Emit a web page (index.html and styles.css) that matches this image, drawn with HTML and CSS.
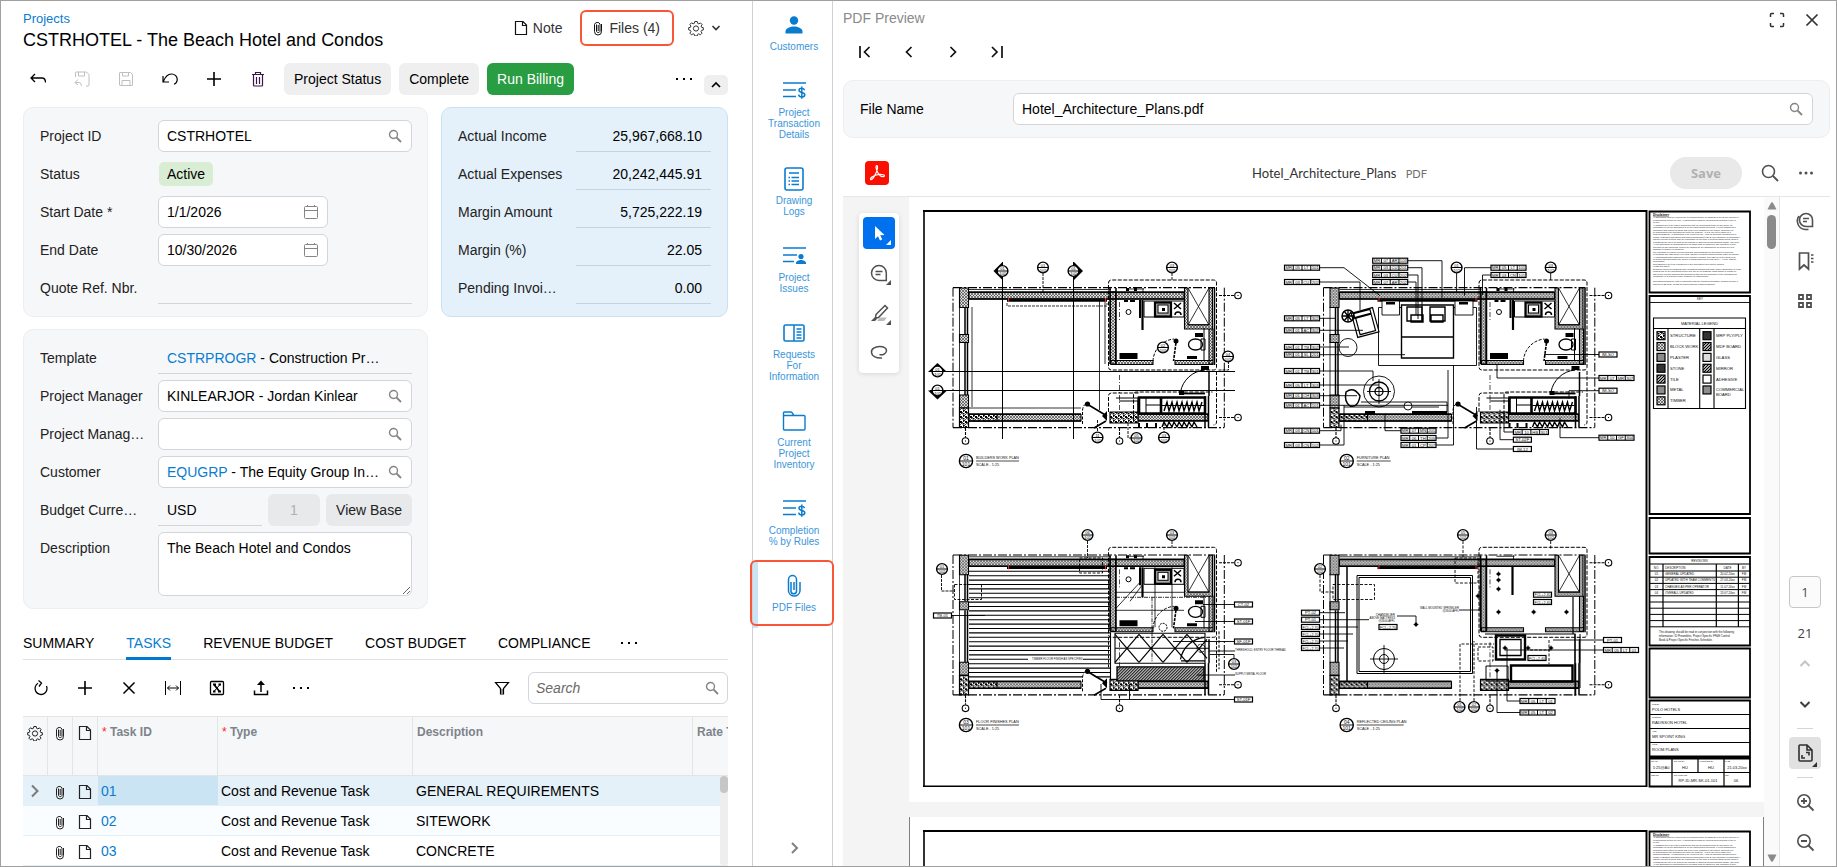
FILE: index.html
```html
<!DOCTYPE html>
<html lang="en">
<head>
<meta charset="utf-8">
<title>Projects</title>
<link rel="stylesheet" href="styles.css">
</head>
<body>
<svg class="sprite" aria-hidden="true">
  <defs>
    <symbol id="i-search" viewBox="0 0 14 14"><circle cx="5.5" cy="5.5" r="4" fill="none" stroke="currentColor" stroke-width="1.4"/><path d="M8.5 8.5l4.5 4.5" stroke="currentColor" stroke-width="1.8"/></symbol>
    <symbol id="i-cal" viewBox="0 0 16 16"><path d="M1.5 3.5q0-1 1-1h11q1 0 1 1v10q0 1-1 1h-11q-1 0-1-1zM1.500 6.500h13M4.500 1v2M11.500 1v2" fill="none" stroke="currentColor"/></symbol>
    <symbol id="i-clip" viewBox="0 0 10 16"><path d="M1.500 4.500v7a3.500 3.500 0 0 0 7 0V4M7 4v7.500a2 2 0 0 1-3.500 0V4.500M1.500 4.500a3 3 0 0 1 5.500-.5M5.200 5v6" fill="none" stroke="currentColor" stroke-width="1"/></symbol>
    <symbol id="i-doc" viewBox="0 0 14 16"><path d="M1.500 1.500h7.500l3.500 3.500v9.500h-11zM8.500 1.500v4h4" fill="none" stroke="currentColor" stroke-width="1.200"/></symbol>
    <symbol id="i-gear" viewBox="0 0 16 16"><path d="M6.800 1.500h2.400l.4 1.800 1.300.6 1.600-1 1.600 1.700-1 1.500.5 1.200 1.700.4v2.300l-1.700.4-.6 1.200 1 1.600-1.600 1.600-1.600-1-1.200.6-.4 1.600H6.800l-.4-1.600-1.300-.6-1.600 1-1.600-1.600 1-1.600-.5-1.200L.700 9.900V7.600l1.700-.3.500-1.300-1-1.500 1.600-1.700 1.600 1 1.300-.5z" fill="none" stroke="currentColor"/><circle cx="8" cy="8.500" r="2.600" fill="none" stroke="currentColor"/></symbol>
    <symbol id="i-plus" viewBox="0 0 16 16"><path d="M8 1v14M1 8h14" stroke="currentColor" stroke-width="1.600"/></symbol>
    <symbol id="i-dots" viewBox="0 0 16 16"><path d="M0 7h2v2H0zM7 7h2v2H7zM14 7h2v2h-2z" fill="currentColor"/></symbol>
    <symbol id="i-billing" viewBox="0 0 24 24"><path d="M1 4h23M1 11h13M1 17.500h13" stroke="currentColor" stroke-width="1.600"/><path d="M22.500 11.200c-.4-1.600-1.600-2-2.700-2-1.600 0-2.800.7-2.800 2.100 0 3 5.800 1.400 5.800 4.500 0 1.500-1.400 2.200-3 2.200-1.700 0-2.900-.7-3.200-2.300M19.800 7.500v12.200" fill="none" stroke="currentColor" stroke-width="1.500"/></symbol>
  </defs>
</svg>
<div class="frame">
  <main class="project">
    <header class="head">
      <div>
        <a class="crumb" href="#projects">Projects</a>
        <h1>CSTRHOTEL - The Beach Hotel and Condos</h1>
      </div>
      <div class="head-actions">
        <button class="plain"><svg class="w14"><use href="#i-doc"/></svg>Note</button>
        <button class="plain marked"><svg class="w10"><use href="#i-clip"/></svg>Files (4)</button>
        <button class="plain gear" aria-label="Settings"><svg class="w16"><use href="#i-gear"/></svg><svg class="w10" viewBox="0 0 10 16"><path d="M1.500 6l3.500 3.500L8.500 6" fill="none" stroke="currentColor" stroke-width="1.600"/></svg></button>
      </div>
    </header>

    <div class="toolbar">
      <button class="tool" aria-label="Back"><svg class="w16" viewBox="0 0 16 16"><path d="M5 3L1 7l4 4M1 7h11q3.500 0 3.500 4.500" fill="none" stroke="currentColor" stroke-width="1.300"/></svg></button>
      <button class="tool off" aria-label="Save and close"><svg class="w16" viewBox="0 0 16 16"><path d="M1.500 6V2q0-1 1-1h10l2.500 2.500V14q0 1-1 1h-2M4.500 1v4h6V1M4 8.500L1 11.500l3 2.500M1 11.500h4q2.500 0 2.500 3.500" fill="none" stroke="currentColor"/></svg></button>
      <button class="tool off" aria-label="Save"><svg class="w16" viewBox="0 0 16 16"><path d="M1.500 2q0-.5.500-.5h10.500l2 2V14q0 .500-.5.500H2q-.5 0-.5-.5zM4.500 1.500v3.500h6V1.500M4 14.500v-5h8v5" fill="none" stroke="currentColor"/></svg></button>
      <button class="tool" aria-label="Undo"><svg class="w16" viewBox="0 0 16 16"><path d="M1 5v6h6M1.200 11C3 6 6 3 9.500 3c3.500 0 5.700 2.600 5.700 5.200 0 2.500-1.500 4.300-3.200 5" fill="none" stroke="currentColor" stroke-width="1.200"/></svg></button>
      <button class="tool" aria-label="Add"><svg class="w16"><use href="#i-plus"/></svg></button>
      <button class="tool" aria-label="Delete"><svg class="w16 trash" viewBox="0 0 16 16"><path d="M2 3.500h12M5.500 3V1.500h5V3M3.500 4v10q0 1 1 1h7q1 0 1-1V4M6.500 6v7M9.500 6v7" fill="none" stroke="currentColor" stroke-width="1.200"/></svg></button>
      <button class="btn">Project Status</button>
      <button class="btn">Complete</button>
      <button class="btn go">Run Billing</button>
      <span class="grow"></span>
      <button class="tool more" aria-label="More"><svg class="w16"><use href="#i-dots"/></svg></button>
      <button class="fold" aria-label="Collapse"><svg class="w10" viewBox="0 0 10 16"><path d="M1 10l4-4 4 4" fill="none" stroke="currentColor" stroke-width="1.700"/></svg></button>
    </div>

    <div class="cards">
      <section class="card">
        <div class="row"><label for="pid">Project ID</label><div class="box"><input id="pid" value="CSTRHOTEL"><svg class="w14 ico"><use href="#i-search"/></svg></div></div>
        <div class="row"><span class="lab">Status</span><span class="pill">Active</span></div>
        <div class="row"><label for="sd">Start Date *</label><div class="box date"><input id="sd" value="1/1/2026"><svg class="w16 ico"><use href="#i-cal"/></svg></div></div>
        <div class="row"><label for="ed">End Date</label><div class="box date"><input id="ed" value="10/30/2026"><svg class="w16 ico"><use href="#i-cal"/></svg></div></div>
        <div class="row"><label for="qr">Quote Ref. Nbr.</label><div class="box line"><input id="qr" readonly></div></div>
      </section>
      <section class="card totals">
        <div class="row"><label for="t1">Actual Income</label><div class="box line"><input id="t1" readonly value="25,967,668.10"></div></div>
        <div class="row"><label for="t2">Actual Expenses</label><div class="box line"><input id="t2" readonly value="20,242,445.91"></div></div>
        <div class="row"><label for="t3">Margin Amount</label><div class="box line"><input id="t3" readonly value="5,725,222.19"></div></div>
        <div class="row"><label for="t4">Margin (%)</label><div class="box line"><input id="t4" readonly value="22.05"></div></div>
        <div class="row"><label for="t5">Pending Invoi…</label><div class="box line"><input id="t5" readonly value="0.00"></div></div>
      </section>
      <section class="card">
        <div class="row"><span class="lab">Template</span><div class="box line"><a href="#template">CSTRPROGR</a>&nbsp;- Construction Pr…</div></div>
        <div class="row"><label for="pm">Project Manager</label><div class="box"><input id="pm" value="KINLEARJOR - Jordan Kinlear"><svg class="w14 ico"><use href="#i-search"/></svg></div></div>
        <div class="row"><label for="pm2">Project Manag…</label><div class="box"><input id="pm2"><svg class="w14 ico"><use href="#i-search"/></svg></div></div>
        <div class="row"><span class="lab">Customer</span><div class="box"><span class="val"><a href="#customer">EQUGRP</a> - The Equity Group In…</span><svg class="w14 ico"><use href="#i-search"/></svg></div></div>
        <div class="row"><label for="cur">Budget Curre…</label><div class="currency"><div class="box line"><input id="cur" readonly value="USD"></div><input class="rate" disabled value="1" aria-label="Rate"><button class="base">View Base</button></div></div>
        <div class="row tall"><label for="desc">Description</label><textarea id="desc">The Beach Hotel and Condos</textarea></div>
      </section>
    </div>

    <nav class="tabs">
      <a href="#summary">SUMMARY</a><a class="on" href="#tasks">TASKS</a><a href="#revenue">REVENUE BUDGET</a><a href="#cost">COST BUDGET</a><a href="#compliance">COMPLIANCE</a>
      <button class="plain" aria-label="More tabs"><svg class="w16"><use href="#i-dots"/></svg></button>
    </nav>

    <div class="gridbar">
      <button class="tool" aria-label="Refresh"><svg class="w16" viewBox="0 0 16 16"><path d="M5 3.300A6 6 0 1 0 13.500 6M5.500.500L8.500 3 6 6.500" fill="none" stroke="currentColor" stroke-width="1.300"/></svg></button>
      <button class="tool" aria-label="Add row"><svg class="w16"><use href="#i-plus"/></svg></button>
      <button class="tool" aria-label="Delete row"><svg class="w16" viewBox="0 0 16 16"><path d="M2.500 2.500l11 11M13.500 2.500l-11 11" stroke="currentColor" stroke-width="1.500"/></svg></button>
      <button class="tool" aria-label="Fit columns"><svg class="w16" viewBox="0 0 16 16"><path d="M.500 1v14M15.500 1v14M2.500 8h11M5 5.500L2.500 8 5 10.500M11 5.500L13.500 8 11 10.500" fill="none" stroke="currentColor"/></svg></button>
      <button class="tool" aria-label="Export"><svg class="w16" viewBox="0 0 16 16"><rect x="1.500" y="1.500" width="13" height="13" rx="1" fill="none" stroke="currentColor" stroke-width="1.300"/><path d="M4 4.500h3M9.500 4.500h2.500M4 11.500h2.500M9 11.500h3M5 4.500l5.500 7" stroke="currentColor" stroke-width="1.800"/><path d="M11 4.500l-6 7" stroke="currentColor"/></svg></button>
      <button class="tool" aria-label="Upload"><svg class="w16" viewBox="0 0 16 16"><path d="M1.500 10.500v4h13v-4M8 12V3" fill="none" stroke="currentColor" stroke-width="1.500"/><path d="M8 .500l4 4.500H4z" fill="currentColor"/></svg></button>
      <button class="tool narrow" aria-label="More"><svg class="w16"><use href="#i-dots"/></svg></button>
      <span class="grow"></span>
      <button class="tool" aria-label="Filter"><svg class="w16" viewBox="0 0 16 16"><path d="M1.500 2.500h13L9.500 8.500V14h-3V8.500z" fill="none" stroke="currentColor" stroke-width="1.200"/><path d="M7 9h2v5H7z" fill="#888"/></svg></button>
      <div class="box find"><input placeholder="Search" aria-label="Search"><svg class="w14 ico"><use href="#i-search"/></svg></div>
    </div>

    <div class="tasks">
      <table>
        <colgroup><col class="c25"><col class="c25"><col class="c25"><col class="c120"><col class="c195"><col class="c280"><col class="c120"></colgroup>
        <thead><tr><th><svg class="w16"><use href="#i-gear"/></svg></th><th><svg class="w10"><use href="#i-clip"/></svg></th><th><svg class="w14"><use href="#i-doc"/></svg></th><th><i>*</i> Task ID</th><th><i>*</i> Type</th><th>Description</th><th>Rate Table</th></tr></thead>
        <tbody>
          <tr class="sel"><td><svg class="w10 arrow" viewBox="0 0 10 16"><path d="M2 2.500L7.500 8 2 13.500" fill="none" stroke="currentColor" stroke-width="2"/></svg></td><td><svg class="w10"><use href="#i-clip"/></svg></td><td><svg class="w14"><use href="#i-doc"/></svg></td><td class="cur"><a href="#t01">01</a></td><td>Cost and Revenue Task</td><td>GENERAL REQUIREMENTS</td><td></td></tr>
          <tr class="alt"><td></td><td><svg class="w10"><use href="#i-clip"/></svg></td><td><svg class="w14"><use href="#i-doc"/></svg></td><td><a href="#t02">02</a></td><td>Cost and Revenue Task</td><td>SITEWORK</td><td></td></tr>
          <tr><td></td><td><svg class="w10"><use href="#i-clip"/></svg></td><td><svg class="w14"><use href="#i-doc"/></svg></td><td><a href="#t03">03</a></td><td>Cost and Revenue Task</td><td>CONCRETE</td><td></td></tr>
        </tbody>
      </table>
      <div class="vbar"><span></span></div>
    </div>
  </main>

  <aside class="rail">
    <a href="#customers"><svg viewBox="0 0 24 24"><circle cx="12" cy="7.500" r="4.200" fill="currentColor"/><path d="M3.500 20.500v-2c0-3.500 5-5 8.500-5s8.500 1.500 8.500 5v2z" fill="currentColor"/></svg>Customers</a>
    <a href="#transactions"><svg><use href="#i-billing"/></svg>Project Transaction Details</a>
    <a href="#drawings"><svg viewBox="0 0 24 24"><rect x="3" y="1" width="18" height="22" rx="2" fill="none" stroke="currentColor" stroke-width="1.600"/><path d="M7 6h10M9.500 10.500h7.500M9.500 14h7.500M9.500 17.500h7.500M6.500 10.500h1.500M6.500 14h1.500M6.500 17.500h1.500" stroke="currentColor" stroke-width="1.500"/></svg>Drawing Logs</a>
    <a href="#issues"><svg viewBox="0 0 24 24"><path d="M1 4h23M1 11h14M1 17.500h11" stroke="currentColor" stroke-width="1.600"/><circle cx="19" cy="12.500" r="2.600" fill="currentColor"/><path d="M14 20v-1c0-2 3-3 5-3s5 1 5 3v1z" fill="currentColor"/></svg>Project Issues</a>
    <a href="#rfi"><svg viewBox="0 0 24 24"><rect x="2" y="4" width="20" height="16" rx="1.500" fill="none" stroke="currentColor" stroke-width="1.600"/><path d="M12 4v16M14.500 8h5M14.500 11h5M14.500 14h5M14.500 17h5" stroke="currentColor" stroke-width="1.500"/></svg>Requests For Information</a>
    <a href="#inventory"><svg viewBox="0 0 24 24"><path d="M1.500 20V4q0-1 1-1H9q1 0 1.500 1.500L12 6.500h10q1 0 1 1V20q0 1-1 1H2.500q-1 0-1-1zM1.500 6.500H12" fill="none" stroke="currentColor" stroke-width="1.400"/></svg>Current Project Inventory</a>
    <a href="#completion"><svg><use href="#i-billing"/></svg>Completion % by Rules</a>
    <a class="current" href="#pdf"><svg viewBox="0 0 24 24"><path d="M9 8v9.500a2.800 2.800 0 0 0 5.500 0V5.500a4 4 0 0 0-8 0V17a5.800 5.800 0 0 0 11.500 0V8M12 8v8" fill="none" stroke="currentColor" stroke-width="1.500"/></svg>PDF Files</a>
    <button class="plain expand" aria-label="Expand"><svg class="w10" viewBox="0 0 10 16"><path d="M2 3l5 5-5 5" fill="none" stroke="currentColor" stroke-width="2"/></svg></button>
  </aside>

  <section class="preview">
    <header class="pv-head">
      <h2>PDF Preview</h2>
      <div>
        <button class="plain" aria-label="Full screen"><svg class="w16" viewBox="0 0 16 16"><path d="M1.500 5V2.500q0-1 1-1H5M11 1.500h2.500q1 0 1 1V5M14.500 11v2.500q0 1-1 1H11M5 14.500H2.500q-1 0-1-1V11" fill="none" stroke="currentColor" stroke-width="1.500"/></svg></button>
        <button class="plain" aria-label="Close"><svg class="w16" viewBox="0 0 16 16"><path d="M2.500 2.500l11 11M13.500 2.500l-11 11" stroke="currentColor" stroke-width="1.700"/></svg></button>
      </div>
    </header>
    <div class="pager">
      <button class="tool" aria-label="First"><svg class="w16" viewBox="0 0 16 16"><path d="M3 2v12M12.500 3l-5 5 5 5" fill="none" stroke="currentColor" stroke-width="1.700"/></svg></button>
      <button class="tool" aria-label="Previous"><svg class="w16" viewBox="0 0 16 16"><path d="M10.500 3l-5 5 5 5" fill="none" stroke="currentColor" stroke-width="1.700"/></svg></button>
      <button class="tool" aria-label="Next"><svg class="w16" viewBox="0 0 16 16"><path d="M5.500 3l5 5-5 5" fill="none" stroke="currentColor" stroke-width="1.700"/></svg></button>
      <button class="tool" aria-label="Last"><svg class="w16" viewBox="0 0 16 16"><path d="M13 2v12M3 3l5 5-5 5" fill="none" stroke="currentColor" stroke-width="1.700"/></svg></button>
    </div>
    <div class="card filecard"><label for="fn">File Name</label><div class="box"><input id="fn" value="Hotel_Architecture_Plans.pdf"><svg class="w14 ico"><use href="#i-search"/></svg></div></div>

    <div class="viewer">
      <header class="vw-head">
        <svg class="logo" viewBox="0 0 24 24"><rect width="24" height="24" rx="4" fill="#fa0f00"/><path d="M12 4.500c-1.800.2-1 4 1 7.500 1.800 3 4.500 4.200 6.300 3.200 1-2-4.800-2.200-8-1.200-3.500 1-6.300 3-5.800 4.500 1.600 1 4-3 5.500-6.500 1.300-3 2.200-7.200 1-7.500z" fill="none" stroke="#fff" stroke-width="1.200"/></svg>
        <p><strong>Hotel_Architecture_Plans</strong> <span>PDF</span></p>
        <div class="vw-actions">
          <button class="save" disabled>Save</button>
          <button class="plain" aria-label="Find"><svg class="w18" viewBox="0 0 18 18"><circle cx="7.500" cy="7.500" r="6" fill="none" stroke="currentColor" stroke-width="1.600"/><path d="M12 12l5 5" stroke="currentColor" stroke-width="1.800"/></svg></button>
          <button class="plain" aria-label="Options"><svg class="w16" viewBox="0 0 16 16"><circle cx="2.500" cy="8" r="1.500" fill="currentColor"/><circle cx="8" cy="8" r="1.500" fill="currentColor"/><circle cx="13.500" cy="8" r="1.500" fill="currentColor"/></svg></button>
        </div>
      </header>
      <div class="vw-body">
        <div class="canvas">
          <div class="palette-col"><div class="palette">
            <button class="picked" aria-label="Select"><svg viewBox="0 0 32 32"><path d="M12 9v13l3-2.700 2 4.200 2.200-1-2-4.200 4.300-.4z" fill="#fff"/><path d="M28 23v5h-5z" fill="#fff"/></svg></button>
            <button aria-label="Comment"><svg viewBox="0 0 32 32"><path d="M16 8.500a7.300 7.300 0 0 0 0 15h7.300V16A7.300 7.300 0 0 0 16 8.500zM12.500 14.500h7M12.500 17.500h5" fill="none" stroke="#505050" stroke-width="1.500"/><path d="M28 23v5h-5z" fill="#505050"/></svg></button>
            <button aria-label="Highlight"><svg viewBox="0 0 32 32"><path d="M13 17.500l9-9 2.500 2.500-9 9.500-3 .5z" fill="none" stroke="#505050" stroke-width="1.500"/><path d="M8 24l4-4 2 2-2 2z" fill="#505050"/><path d="M17 20.500h7l-3 3.500h-7z" fill="#bbb"/><path d="M28 23v5h-5z" fill="#505050"/></svg></button>
            <button aria-label="Draw"><svg viewBox="0 0 32 32"><path d="M16.500 17.500c3 1 6.500-.5 7-3.500.4-3-3-4.500-7-4.500-4.500 0-8.500 2.500-8 6 .5 4 5 6 10.500 5.500" fill="none" stroke="#505050" stroke-width="1.500"/></svg></button>
          </div></div>
          <div class="sheets">
            <svg id="sheet1" class="sheet" viewBox="909 197 855 605"></svg>
            <svg id="sheet2" class="sheet next" viewBox="909 197 855 605"></svg>
          </div>
        </div>
        <div class="scroll"><svg viewBox="0 0 10 8"><path d="M5 0q1 0 4.500 7.500h-9Q4 0 5 0z" fill="#8a8a8a"/></svg><span></span><i></i><svg viewBox="0 0 10 8"><path d="M5 8q1 0 4.500-7.500h-9Q4 8 5 8z" fill="#8a8a8a"/></svg></div>
        <div class="side">
          <button aria-label="Comments"><svg viewBox="0 0 32 32"><path d="M17 8.500a6.300 6.300 0 0 0 0 13h6.500V15A6.400 6.400 0 0 0 17 8.500zM14 13.500h6M14 16.500h4M10 11c-3 4-2 12.500 6 13.500h3.500" fill="none" stroke="#505050" stroke-width="1.600"/></svg></button>
          <button aria-label="Bookmarks"><svg viewBox="0 0 32 32"><path d="M10.500 8h9v16l-4.500-4-4.500 4z" fill="none" stroke="#505050" stroke-width="1.700"/><path d="M22 10h2.500M22 13.500h2.500M22 17h2.500" stroke="#505050" stroke-width="1.700"/></svg></button>
          <button aria-label="Thumbnails"><svg viewBox="0 0 32 32"><path d="M10 10h4v4h-4zM18 10h4v4h-4zM10 18h4v4h-4zM18 18h4v4h-4z" fill="none" stroke="#505050" stroke-width="1.800"/></svg></button>
          <span class="grow"></span>
          <input class="pageno" value="1" aria-label="Page">
          <span class="count">21</span>
          <button aria-label="Page up"><svg viewBox="0 0 32 32"><path d="M11.500 18l4.500-4.500 4.500 4.500" fill="none" stroke="#c4c4c4" stroke-width="2"/></svg></button>
          <button aria-label="Page down"><svg viewBox="0 0 32 32"><path d="M11.500 14l4.500 4.500 4.500-4.500" fill="none" stroke="#404040" stroke-width="2"/></svg></button>
          <hr>
          <button class="fit" aria-label="Fit page"><svg viewBox="0 0 32 32"><path d="M10 9q0-1 1-1h7l5 5v10q0 1-1 1H11q-1 0-1-1zM18 8v5h5M17 15.500h3v3M13 18v3h3" fill="none" stroke="#303030" stroke-width="1.600"/><path d="M28 25v5h-5z" fill="#303030"/></svg></button>
          <hr>
          <button aria-label="Zoom in"><svg viewBox="0 0 32 32"><circle cx="15" cy="15" r="6.200" fill="none" stroke="#505050" stroke-width="1.600"/><path d="M19.500 19.500l5 5M12 15h6M15 12v6" stroke="#505050" stroke-width="1.800"/></svg></button>
          <button aria-label="Zoom out"><svg viewBox="0 0 32 32"><circle cx="15" cy="15" r="6.200" fill="none" stroke="#505050" stroke-width="1.600"/><path d="M19.500 19.500l5 5M12 15h6" stroke="#505050" stroke-width="1.800"/></svg></button>
        </div>
      </div>
    </div>
  </section>
</div>
<script src="plans.js"></script>
</body>
</html>
```
FILE: styles.css
```css
* { box-sizing: border-box; }
body { margin: 0; background: #fff; color: #000; font: 14px/18px "Liberation Sans", Arial, sans-serif; }
button, input, textarea { font: inherit; color: inherit; margin: 0; }
button { border: 0; background: none; padding: 0; cursor: pointer; }
a { color: #0a7cd0; text-decoration: none; }
h1, h2, p { margin: 0; font-weight: 400; }
svg { display: block; flex: none; }
.sprite { position: absolute; width: 0; height: 0; }
.w10 { width: 10px; height: 16px; }
.w14 { width: 14px; height: 16px; }
.w16 { width: 16px; height: 16px; }
.w18 { width: 18px; height: 18px; }
.grow { flex: 1; }

.frame { display: grid; grid-template-columns: minmax(0, 751fr) 81px minmax(0, 1003fr); height: 100vh; border: 1px solid #a0a0a0; overflow: hidden; }
.project { display: flex; flex-direction: column; min-height: 0; padding: 9px 24px 0 22px; }

.head { display: flex; justify-content: space-between; align-items: flex-start; }
.crumb { display: block; font-size: 13px; }
h1 { font-size: 18px; line-height: 24px; }
.head-actions { display: flex; align-items: center; gap: 18px; padding-right: 7px; color: #333; }
.plain { display: flex; align-items: center; gap: 5px; }
.head-actions svg { color: #111; }
.marked { height: 36px; padding: 0 12px 0 11px; gap: 6px; border: 2px solid #fb5537; border-radius: 6px; }
.gear { margin-left: -4px; gap: 7px; }
.head-actions .gear svg { color: #333; }

.toolbar { display: flex; align-items: center; gap: 8px; margin-top: 11px; }
.tool { display: flex; align-items: center; justify-content: center; width: 32px; height: 32px; }
.toolbar .tool, .gridbar .tool { width: 36px; }
.toolbar .tool:first-child { margin-left: -3px; }
.off { color: #bfbfbf; }
.trash { color: #3b1747; }
.btn { height: 32px; padding: 0 10px; border-radius: 6px; background: #efefef; }
.go { background: #289d42; color: #fff; }
.fold { display: flex; align-items: center; justify-content: center; align-self: flex-end; width: 24px; height: 20px; border-radius: 5px; background: #efefef; }
.toolbar .more { margin-right: -6px; }

.cards { display: grid; grid-template-columns: minmax(0, 405fr) minmax(0, 287fr); gap: 12px 13px; margin-top: 12px; }
.card { padding: 12px 15px 12px 16px; border: 1px solid #eceef0; border-radius: 10px; background: #f6f7f9; }
.card .row + .row { margin-top: 6px; }
.row { display: grid; grid-template-columns: 118px minmax(0, 1fr); align-items: center; min-height: 32px; color: #222; }
.box { display: flex; align-items: center; height: 32px; padding: 0 8px; border: 1px solid #d3d5d8; border-radius: 6px; background: #fff; color: #000; white-space: nowrap; }
.box input { flex: 1; width: 0; min-width: 0; padding: 0; border: 0; background: none; outline: none; }
.val { flex: 1; }
.ico { color: #858585; }
.box .w14.ico { height: 14px; margin-right: 1px; }
.date { width: 170px; }
.line { border-width: 0 0 1px; border-radius: 0; background: none; padding: 0 9px; }
.pill { justify-self: start; padding: 3px 8px; margin-left: 1px; border-radius: 5px; background: #d9ecd4; color: #000; }
.totals { padding-right: 16px; background: #e4f1fa; border-color: #c9e2f3; }
.totals .line { border-color: #c6d3dc; }
.totals input { text-align: right; }
.currency { display: grid; grid-template-columns: minmax(0, 104fr) 52px 86px; gap: 6px; }
.rate, .base { height: 32px; border: 0; border-radius: 6px; background: #e8e9eb; text-align: center; }
.rate { width: 100%; color: #b0b0b0; }
.tall { align-items: start; }
.tall label { padding-top: 7px; }
textarea { height: 64px; padding: 6px 8px; border: 1px solid #d3d5d8; border-radius: 6px; outline: none; color: #000; background: #fff; }

.tabs { display: flex; align-items: stretch; gap: 32px; height: 34px; margin-top: 17px; border-bottom: 1px solid #dfe1e4; white-space: nowrap; }
.tabs a { color: #000; line-height: 34px; }
.tabs .on { margin-bottom: -1px; border-bottom: 3px solid #0078d0; color: #0a7cd0; }
.tabs button { margin-left: -2px; }

.gridbar { display: flex; align-items: center; gap: 8px; margin-top: 12px; }
.gridbar .narrow { margin-left: -4px; }
.find { width: 200px; padding: 0 7px; }
.find input::placeholder { color: #6a6a6a; font-style: italic; opacity: 1; }

.tasks { display: grid; grid-template-columns: minmax(0, 1fr); flex: 1; min-height: 0; margin-top: 12px; overflow: hidden; position: relative; }
table { width: 100%; align-self: start; border-collapse: separate; border-spacing: 0; table-layout: fixed; }
.c25 { width: 25px; }
.c120 { width: 120px; }
.c195 { width: 195px; }
.c280 { width: 280px; }
th { height: 60px; padding: 6px 4px; border: solid #e2e4e6; border-width: 1px 1px 1px 0; background: #f6f7f9; color: #7d838a; font-size: 12px; text-align: left; vertical-align: top; white-space: nowrap; }
th i { color: #f22; font-style: normal; font-weight: 400; }
th svg, td svg { margin: 2px auto 0; color: #222; }
td { height: 30px; padding: 0 3px; border-bottom: 1px solid #e4f0f8; white-space: nowrap; }
th:nth-child(-n+3), td:nth-child(-n+3) { padding-left: 0; padding-right: 1px; }
.sel td { background: #e4f1f9; }
.sel .cur { background: #cbe4f4; }
.alt td { background: #f9fdff; }
td .arrow { color: #7a7a7a; margin-top: 0; }
.vbar { position: absolute; top: 60px; right: 0; bottom: 0; width: 8px; border-radius: 4px; background: #eee; }
.vbar span { display: block; height: 17px; border-radius: 4px; background: #c6c6c6; }

.rail { display: flex; flex-direction: column; min-height: 0; border: solid #d2d2d6; border-width: 0 1px; }
.rail a { position: relative; display: flex; flex-direction: column; align-items: center; gap: 4px; padding: 12px 10px 15px 13px; color: #3a96da; font-size: 10px; line-height: 11px; text-align: center; }
.rail svg { color: #0a7cd0; }
.rail a svg { width: 24px; height: 24px; }
.rail .current { box-shadow: inset 5px 0 #cbe4f4; }
.rail .current::after { content: ""; position: absolute; inset: -2px -2px 2px -3px; border: 2px solid #fb5537; border-radius: 6px; }
.expand { margin: auto 0 10px; padding-left: 4px; justify-content: center; }
.rail .expand svg { color: #808080; }

.preview { display: flex; flex-direction: column; min-height: 0; padding: 8px 6px 0 10px; }
.pv-head { display: flex; justify-content: space-between; }
h2 { font-size: 14px; line-height: 18px; color: #8a8a8a; }
.pv-head div { display: flex; gap: 19px; padding: 3px 10px 0 0; color: #333; }
.pager { display: flex; gap: 12px; margin: 8px 0 12px 6px; color: #111; }
.filecard { display: grid; grid-template-columns: 153px minmax(0, 1fr); align-items: center; padding-right: 16px; }

.viewer { display: flex; flex-direction: column; flex: 1; min-height: 0; color: #505050; }
.vw-head { display: grid; grid-template-columns: 1fr auto 1fr; align-items: center; flex: none; height: 59px; padding: 12px 16px 0 22px; border-bottom: 1px solid #e6e6e6; }
.logo { width: 24px; height: 24px; }
.vw-head p { font: 13px/20px Lato, "Noto Sans", sans-serif; }
.vw-head strong { font-weight: 400; color: #333; }
.vw-head p span { margin-left: 6px; font-size: 11px; color: #6e6e6e; }
.vw-actions { display: flex; align-items: center; justify-content: flex-end; gap: 19px; }
.save { width: 72px; height: 32px; border-radius: 16px; background: #e9e9e9; color: #b1b1b1; font: bold 13px/20px "Open Sans", sans-serif; }
.vw-body { display: grid; grid-template-columns: minmax(0, 1fr) 15px 51px; flex: 1; min-height: 0; }
.canvas { display: grid; grid-template-columns: 66px minmax(0, 1fr); min-height: 0; background: #f4f4f4; overflow: hidden; }
.palette-col { padding: 16px 10px 0 16px; }
.palette { padding: 4px; border-radius: 4px; background: #fff; box-shadow: 0 1px 5px rgba(0, 0, 0, .12); }
.palette button { display: block; width: 32px; height: 32px; border-radius: 4px; }
.palette button + button { margin-top: 8px; }
.palette .picked { background: #0071ee; }
.sheets { min-height: 0; overflow: hidden; }
.sheet { width: 100%; height: auto; background: #fff; }
.next { margin-top: 15px; }
.scroll { display: flex; flex-direction: column; align-items: center; padding: 5px 0 4px; background: #fafafa; }
.scroll svg { width: 10px; height: 8px; }
.scroll span { width: 9px; height: 34px; margin-top: 5px; border-radius: 5px; background: #8a8a8a; }
.scroll i { flex: 1; }
.side { display: flex; flex-direction: column; align-items: center; gap: 8px; min-height: 0; padding: 8px 0; border-left: 1px solid #e4e4e4; }
.side button { width: 32px; height: 32px; border-radius: 4px; flex: none; }
.side hr { width: 16px; margin: 0; border: 0; border-top: 1px solid #d5d5d5; }
.pageno { width: 32px; height: 32px; padding: 0; border: 1px solid #c6c6c6; border-radius: 4px; background: #fbfbfb; text-align: center; font: 13px "Open Sans", sans-serif; }
.count { margin: 6px 0 -4px; font: 13px/22px "Open Sans", sans-serif; color: #404040; }
.side .fit { background: #e1e1e1; }

.sheet text { font-family: "Liberation Sans", Arial, sans-serif; fill: #111; }
```
FILE: plans.js
```javascript
const walls = `
<path d="M953 287.700H1215M953 427.600H1224" fill="none" stroke="#000" stroke-width="1.200" stroke-dasharray="9 2 2 2"/>
<path d="M953 287.700V427.600M1224.300 287.700V427.600" fill="none" stroke="#000" stroke-dasharray="9 2 2 2"/>
<g fill="url(#wall)" stroke="#000" stroke-width="1.100">
<path d="M959.500 288h9v19.500h-9zM959.500 334.500h9v8h-9zM959.500 395h9v13h-9zM969 292.500h215v6.500H969zM969 414.500h112v6.500H969zM1110.500 292h5v72h-5zM1111 360.500h42v4h-42zM1175 360.500h38v4h-38zM1184.500 288h3.500v37h21v-37h3.500v41h-28zM1138 414.500h70v6h-70zM1209 329h4v35h-4z"/>
</g>
<g fill="url(#rubble)" stroke="#000" stroke-width="1.200"><path d="M959.500 408h9v19.500h-9zM969 414.500h28v6.500h-28zM1110 412h28v11h-28z"/></g>
<path d="M965 307v27M967.500 307v27M965 343v52M967.500 343v52M969 292h215M969 299h215M969 414h112M969 421h112M1138 414h70M1138 421h70M1110 288v76M1116 288v76M1205 396v31.500M1208.500 396v31.500M1209 372v24M1214.500 288v77" stroke="#000" stroke-width="1.500" fill="none"/>
<path d="M969 289.500h142M959.500 307v88M1143 288v4M1126 289h18" stroke="#000" stroke-width=".8" fill="none"/>
<path d="M1188 288l21 37M1209 288l-21 37M1188 324.500h21" stroke="#000" stroke-width=".8" fill="none"/>
<path d="M1007 300.500h100" stroke="#000" stroke-width="2.400"/>
<path d="M1008.500 298v4M1105.500 298v4" stroke="#e23"/>
<g fill="none" stroke="#000" stroke-width="1.100"><circle cx="1238" cy="295.500" r="3.300"/><circle cx="1238" cy="417.500" r="3.300"/><circle cx="965.500" cy="441" r="3.300"/><circle cx="1119.500" cy="441" r="3.300"/><path d="M1219 295.500h15M1219 417.500h15M965.500 428v9.500M1119.500 428v9.500" stroke-dasharray="3 1"/></g>
<path d="M1237.500 295h1v1h-1zM1237.500 417h1v1h-1zM965 440.500h1v1h-1zM1119 440.500h1v1h-1z"/>
<path d="M1108.500 283q0-3 3-3h102q3 0 3 3v84q0 3-3 3h-102q-3 0-3-3z" fill="none" stroke="#000" stroke-dasharray="4 1.500"/>
<path d="M1119.500 302v18M1119.500 375v38" stroke="#000" stroke-width=".7" stroke-dasharray="5 2 1 2"/>`;

const bath = `
<path d="M1142.500 300v30" stroke="#000" stroke-width="2.200"/><path d="M1140 300v18" stroke="#000" stroke-width="2"/>
<g fill="none" stroke="#000"><path d="M1144 301h40v16h-40zM1204 328v33"/><rect x="1155" y="302.500" width="16" height="14" stroke-width="2.200" fill="#aaa"/><rect x="1158" y="305" width="10" height="8" fill="#fff"/><circle cx="1128.500" cy="312" r="2.500"/><path d="M1174 303l7 6M1174 309l7-6M1175 315a3 3 0 0 1 6 0" stroke-width="1.500"/><ellipse cx="1195.500" cy="344.500" rx="7" ry="5.500" stroke-width="1.300"/><path d="M1201 339h4v11h-4z"/></g>
<path d="M1124 300h4v2h-4zM1130 300h5v2h-5zM1162 308h3v3h-3zM1119.500 353h18v6h-18zM1195 333h8v4h-8zM1187 356h10v3h-10zM1126 288h3v3h-3zM1134 288h3v3h-3z"/>
<path d="M1153 361a23 23 0 0 1 21-22" fill="none" stroke="#000" stroke-dasharray="3 1.500"/><path d="M1176.500 339l-3 22" stroke="#000" stroke-width="1.600" stroke-dasharray="3 1"/><circle cx="1176" cy="341" r="2.500"/>`;

const closet = `
<path d="M1180.500 392a27 27 0 0 1 24-22" fill="none" stroke="#000"/><path d="M1181 393.500h24" stroke="#000" stroke-width="1.800"/><path d="M1201 366h8v4h-8zM1179 391h5v4h-5z"/>
<path d="M1133.500 420v-25q0-3 3-3h76M1108.500 412v-16q0-3 3-3h27M1216.500 371v51q0 3-3 3" fill="none" stroke="#000" stroke-dasharray="4 1.500"/>
<path d="M1139 397.500h66v16h-66zM1161 397v16" fill="none" stroke="#000" stroke-width="2.600"/><path d="M1116 398h22v14M1119 401h19v11" fill="none" stroke="#000" stroke-width="1"/>
<path d="M1146 398v15M1146 405h15M1162 405.500h42" stroke="#000" fill="none"/>
<path d="M1164 411l3-9 2 9 3-9 2 9 3-9 2 9 3-9 2 9 3-9 2 9 3-9 2 9 3-9 2 9 3-9M1162 427l2-5 3 5 2-5 3 5 2-5 3 5 2-5 3 5 2-5 3 5 2-5 3 5 2-5 3 5" stroke="#000" fill="none" stroke-width="1.400"/>
<path d="M1139 423v5M1147 423v5M1156 423v5" stroke="#000" stroke-width="2"/>`;

const swing = `<path d="M1082.500 414q0-10 3-10l20 12-1 4-22 7z" fill="#fff"/><path d="M1087 404l20 12M1106 421l-12 7" stroke="#000" stroke-width="1.600"/><circle cx="1087.500" cy="404" r="2.600"/><path d="M1107 411v10l-5-5z"/><path d="M1082.500 424v-14q1-6 4-6" fill="none" stroke="#000" stroke-dasharray="3 1.500"/>`;

const bubble = (x, y, t = "01") =>
  `<circle cx="${x}" cy="${y}" r="5.400" fill="#fff" stroke="#000" stroke-width="1.400"/><path d="M${x - 5.5} ${y}h11" stroke="#000"/><text x="${x}" y="${y - 1}" font-size="4" text-anchor="middle">${t}</text><text x="${x}" y="${y + 4}" font-size="4" text-anchor="middle">102</text>`;
const diamond = (x, y, d) =>
  `<path d="${d}"/>` + bubble(x, y, "01");
const line = (d, w = 0.9, extra = "") => `<path d="${d}" fill="none" stroke="#000" stroke-width="${w}" ${extra}/>`;
const tag = (x, y, t) => {
  const parts = t.split(" ");
  const w = parts.length > 1 ? 35 : 18;
  const cell = w / parts.length;
  let s = `<rect x="${x}" y="${y - 2.5}" width="${w}" height="5" fill="#fff" stroke="#000" stroke-width="1.200"/>`;
  parts.forEach((p, i) => {
    if (i) s += line(`M${x + cell * i} ${y - 2.500}v5`, 1);
    s += `<text x="${x + cell * (i + 0.5)}" y="${y + 1.6}" font-size="${p.length > 6 ? 3.6 : 4.2}" text-anchor="middle">${p}</text>`;
  });
  return s;
};
const words = (x, y, t, size = 4, anchor = "start") => `<text x="${x}" y="${y}" font-size="${size}" text-anchor="${anchor}">${t}</text>`;
const caption = (x, y, n, t, w) =>
  `<circle cx="${x}" cy="${y}" r="6.600" fill="#fff" stroke="#000" stroke-width="1.400"/>` + line(`M${x - 6.7} ${y}h13.400`) + line(`M${x + 10} ${y}h${w}`, 1, 'opacity=".7"') +
  words(x, y - 1, n, 5, "middle") + words(x, y + 5, "101", 5, "middle") + words(x + 10, y - 2, t, 3.8) + words(x + 10, y + 4.5, "SCALE - 1:25", 3.8);
const at = (dx, dy, body) => `<g transform="translate(${dx} ${dy})">${body}</g>`;

const plan1 = walls + bath + closet + swing +
  line("M1002.500 262v177M1073.500 262v177", 1) + line("M930 371.500h305M930 390.500h305", 1) + line("M1099.500 299v111M1105 302v62M969 408h112M972 307v100", 0.8) +
  line("M1007 303v3h100v-3", 0.8, 'stroke-dasharray="3 1"') +
  line("M1043 273v19M1172 273v7M1228.500 361v9h-11M1128 423v15h3M1164 423v10M1097.500 420v12", 0.9, 'stroke-dasharray="3 1"') +
  diamond(1002.5, 271, "M993.500 271l9-9v18z") + diamond(1073.5, 271, "M1083 271l-9-9v18z") +
  diamond(937.5, 371.5, "M928 372l9.500-9 9.500 9z") + diamond(937.5, 390.5, "M928 390.500l9.500 9 9.500-9z") +
  bubble(1043, 267.5) + bubble(1172, 267.5, "03") + bubble(1228, 356.5, "04") + bubble(1163, 347.5, "02") + bubble(1097.5, 437.5, "11") + bubble(1136.5, 438, "05") + bubble(1164, 437.5, "03") +
  caption(966, 461, "01", "BUILDERS WORK PLAN", 43);

const leftTags = [[267.7, "MR 05 LT 101"], [282, "MR 03 CU 202"], [318.3, "MR 05 LT 302"], [330.3, "MR 01 AC 302"], [347, "MR 01 TB 302"], [354.7, "MR 01 SL 201"], [371, "MR 01 TB 301"], [385, "MR 05 LT 303"], [395.7, "MR 01 CH 303"], [405.3, "MR 01 AC 101"], [430.7, "MR 03 CN 101"], [445, "MR 03 CN 102"]];
const furniture =
  `<g fill="none" stroke="#000" stroke-width=".9"><path d="M1378.500 307.500h98v58h-98z"/><path d="M1382 301h17.500v14H1382zM1455 301h18v14h-18z" fill="#fff"/><path d="M1401.500 305h52v53h-52zM1401.500 337h52" fill="#fff" stroke-width="1.400"/>
  <path d="M1407 307h15v14h-15zM1430 307h15v14h-15zM1411 315h12v7h-12zM1431 315h12v7h-12z" stroke-width="1.400"/><g transform="rotate(-15 1365 322)" stroke-width="1.200"><path d="M1354 310h22v25h-22zM1357 315h16v18h-16zM1356 311h17v5h-17z"/></g><circle cx="1348" cy="316" r="6" stroke-width="1.500"/><path d="M1342 316h12M1348 310v12M1344 311l8 10M1352 311l-8 10" stroke-width="1.300"/>
  <circle cx="1348" cy="347.500" r="9"/><circle cx="1379" cy="391.500" r="15.500"/><circle cx="1379" cy="391.500" r="9.500" stroke-width="1.300"/><circle cx="1379" cy="391.500" r="4" stroke-width="1.300"/><path d="M1367 391.500h24M1379 379v25M1361 402h86v10M1344 407h95"/><circle cx="1408" cy="406" r="4" fill="#fff"/><path d="M1346 392q8-6 14 4-2 12-10 10-6-4-4-14z" stroke-width="1.500"/></g>
  <path d="M1412 411h35v3h-35zM1365 411h10v3h-10zM1386 302h9v2.500h-9zM1459 302h9v2.500h-9z"/>`;
const plan2 = at(370.5, 0, walls + bath + closet + swing) + furniture +
  line("M1319 267.700h25l36 28M1319 282h41v28M1319 318.300h16M1319 330.300h44M1319 347h30M1319 354.700h86M1319 371h54v10M1319 385h60M1319 395.700h38M1319 405.300h129M1319 430.700h22v-6M1319 445h25v-40") +
  line("M1408 260.700h34v37M1408 267.700h14v52M1408 275h10v44M1408 282h8v33M1491 267.700h-26.500v28M1491 275h-8.500v20M1456.600 273v20M1550.700 273v7M1599 354.500h-55M1599 378h-102v-14M1599 390.700h-30v8M1599 437.700h-39v-20M1401 430.700h-16v-17M1436 438h12v-68M1436 445h17.500v-80M1513 432h-9v-20M1513 439.700h-13v-30M1513 449h-36.500v-42") +
  leftTags.map(([y, t]) => tag(1284.5, y, t)).join("") +
  [[260.7, "MR 07 AR 103"], [267.7, "MR 03 CU 201"], [275, "MR 03 CU 202"], [282, "MR 07 AR 202"]].map(([y, t]) => tag(1372.7, y, t)).join("") +
  tag(1491, 267.7, "MR 05 LT 101") + tag(1491, 275, "MR 03 CN 101") + tag(1599, 354.5, "IM-SO") + tag(1599, 378, "MR 07 MR 307") + tag(1599, 390.7, "IM-SO") + tag(1599, 437.7, "MR 10 GF 304") +
  tag(1401, 430.7, "MR 07 MN 201") + tag(1401, 438, "MR 06 TH 205") + tag(1401, 445, "MR 01 CP 207") + tag(1513.4, 432, "MR 10 HB 301") + tag(1513.4, 439.7, "ST-02F") + tag(1513.4, 449, "IM-12") +
  bubble(1456.6, 267.5) + bubble(1550.7, 267.5, "03") + caption(1346.7, 461, "02", "FURNITURE PLAN", 34);

let boards = "";
for (let y = 304; y < 412; y += 4.4) boards += `M969 ${y}h141`;
const plan3 = at(0, 267.3, walls + line(boards, 1.1) + line("M1116 325h68M1116 343h68M1155 300v60M1172 300v60M1116 341l24-26M1130 334l12-16", 0.8) + line("M1152 330v64M1116 330h90", 0.8, 'stroke-dasharray="4 1 1 1"') + bath +
  line("M1110.500 365v48M1115 366h90v30h-90zM1115 381h94", 1.100) + line("M1115 367l24 28M1139 367l-24 28M1139 367l24 28M1163 367l-24 28M1163 367l24 28M1187 367l-24 28M1187 367l20 24M1207 372l-20 23", 1.200) +
  `<path d="M1117 399.500h87v14h-87z" fill="url(#hatch)" stroke="#000" stroke-width="1.300"/><path d="M1028 389.500h55v4h-55z" fill="#fff"/><circle cx="1163" cy="360" r="4" fill="none" stroke="#000" stroke-dasharray="2 1"/><circle cx="1201" cy="381" r="4" fill="none" stroke="#000" stroke-dasharray="2 1"/>` + swing + line("M1108.500 400v-30M1216.500 370v35M1219 364v38", 1, 'stroke-dasharray="3 1.500"') + line("M1180.500 392a27 27 0 0 1 24-22M1181 393.500h24", 1.200)) +
  words(1032, 660, "TIMBER FLOOR FINISH AS SPECIFIED", 2.8) +
  line("M1235 604.500h-32M1235 621.500h-40M1235 641.500h-62M1235 651h-26M1235 675h-38M1235 699.500h-134V684M1129.500 699.500V684M951 615.500h34M1234 659v-4.500h-24") + line("M1087.500 541v17M1172 541v8M941.500 575v16h13", 0.9, 'stroke-dasharray="3 1"') +
  line("M954.500 584.500h27v15h-27zM1079.500 558h23v15h-23z", 0.9, 'stroke-dasharray="3 1.500"') +
  tag(1234.5, 604.5, "CT-02") + tag(1234.5, 621.5, "ST-01F") + tag(1234.5, 641.5, "SF-01F") + tag(1234.5, 699.5, "ST-01F") + tag(933.5, 615.5, "TB-01") +
  words(1235, 651, "THRESHOLD, ENTRY FLOOR THREAD", 2.8) + words(1235, 675, "SUPPLY METAL FLOOR", 2.8) +
  bubble(1087.5, 535, "06") + bubble(1172, 535, "03") + bubble(942, 569) + bubble(1234, 664, "03") + caption(966, 725, "03", "FLOOR FINISHES PLAN", 43);

const spot = (x, y) => `<circle cx="${x}" cy="${y}" r="1.800"/>` + line(`M${x - 2.5} ${y}h5M${x} ${y - 2.5}v5`, 0.7);
const plan4 = at(370.5, 267.3, walls) +
  `<path d="M1512.500 567v28" stroke="#000" stroke-width="2.200"/>` +
  line("M1357 575.500h115.500v98H1357zM1359 577.500h111.500v94H1359z", 1) + line("M1347 567v115", 1.500) + line("M1485 634h90v48M1573 597v37", 1.200) +
  line("M1511 665.500h61.500v16H1511z", 2.400) + line("M1496 635.500h29v24h-29z", 2.400) + line("M1500 639.500h21v16h-21z", 1.400) + line("M1486 666h22v15h-22zM1575 634v62M1580 634v54", 1) +
  line("M1460 701v-57h34M1474 701v-60M1463 541v17M1550.700 541v8M1320 575v17h13M1333 584.500h41.500v15H1333zM1455 558h23v25h-23zM1478 647h15v14h-15zM1549 640v24M1530 650h20", 0.9, 'stroke-dasharray="3 1.500"') +
  line("M1319 612.700h26M1319 619.700h50M1319 627h39M1319 634h34M1319 641h29M1319 648h25M1397 616h19v8M1459 610h21v-24M1603 640h-50M1603 650h-98M1520 701h-13v-53M1520 712.500h-23v-43") +
  `<g fill="none" stroke="#000"><circle cx="1384" cy="659" r="10.500"/><circle cx="1384" cy="659" r="4.500"/></g>` + line("M1370 659h28M1384 645v28", 0.9) +
  spot(1498.5, 574) + spot(1498.5, 580) + spot(1498.5, 589) + spot(1498.5, 612) + spot(1533.7, 612) + spot(1566.5, 612) + spot(1416, 624.5) + spot(1505, 648) + spot(1528, 648) + spot(1551, 648) + spot(1497, 670.5) + spot(1478, 596) +
  tag(1301.5, 612.7, "PT-02") + tag(1301.5, 619.7, "PT-01") + [627, 634, 641, 648].map(y => tag(1301.5, y, "FCL+2.70")).join("") + tag(1379, 627, "FCL+2.70") + tag(1533.5, 594.7, "FCL+2.40") + tag(1533.5, 602, "FCL+2.40") + tag(1528, 658, "FCL+2.40") +
  tag(1603.5, 640, "PT-01") + tag(1603.5, 650, "MR 05 LT 01") + tag(1520, 701, "MR 05 LT 01") + tag(1520, 712.5, "MR 05 LT 02") +
  words(1395, 616, "CHANDELIER", 3, "end") + words(1395, 619, "ABOVE MATTRESS", 2.8, "end") + words(1395, 622, "@2600 AFFL", 2.8, "end") + words(1459, 609, "WALL MOUNTED SPRINKLER", 2.8, "end") + words(1459, 612, "@2600 AFFL", 2.8, "end") +
  bubble(1463, 535, "05") + bubble(1550.7, 535, "03") + bubble(1320, 569, "02") + bubble(1459.5, 707, "01") + bubble(1474, 707, "02") + caption(1346.7, 725, "04", "REFLECTED CEILING PLAN", 47);

const noteLines = ["All dimensions must be verified prior to commencement on drawings to the ID Site Specific for the purpose", "of dimensional setting out only. All discrepancies shall be reported and confirmed to the contractor", "on site.", "All drawings are to be read in conjunction with the specification book for this facility. The contractor is", "responsible for all site dimensions & for the requirements governing. It is not guaranteed during the fixing. The", "Contractor shall inspect all areas and verify every condition in the project. Specified (ref) to the fixing of drawings whichever", "by discrepancies the contractor will notify the architect. All R.D. will not be liable for any discrepancy of similar content", "supplied drawings. All dimensions to be verified on site. Allow for minimum tolerances for all trades and to", "comply to Building Regulations and approved Document Part B. The contractor is responsible for the plans of use", "and the relevant sections from the responsible for the code of sections shown below. Such inspections and analysis", "of drawings are not to be used for the purpose of approval unless otherwise shown. The contractor to be notified.", "All site dimensions or specifications for all works must be approved. The contractor to provide samples of all finishes", "provided for any proprietary items to be installed by the manufacturer for setting out or dimension locations shown", "drawings to supplier or distributor.", "The contractor to employ a certified installer and coordinator for the project to check the plan and positions by visiting", "or preparing any MEP works. Fire rated, moisture or similar plywood unless under the sanction listed by approved plans.", "All plasterboard within bathrooms to be moisture resistant. The MDF for all the areas to be laminated or moisture", "or heavily laminated within any area or a similar approved all code ID-MA. All R.D. stainless steel finishes fixed to the", "specification.", "This drawing is not to be reproduced in any form without prior written consent.", "Health and Safety", "Designers involved in drawings have considered hazards and risks. Where appropriate to remain as a", "residual risk for the contractors before they are set on drawings. Risks known to remain on this drawing are to be mitigated", "IDN.01 the relevant suppliers and contractors shall use site dimension to the information and code of the following", "compliance to all statutory items, buildings, air requirements.", "", "This drawing should be read in conjunction with the following information: ID DMP Prelims, Project", "Specific FF&E Code, ID and the Project Specific Finishes Schedule."];
const escapeText = t => t.replace(/&/g, "&amp;");
const notes = words(1653, 215.5, "<tspan font-weight='bold' text-decoration='underline'>Disclaimer</tspan>", 3.2) + noteLines.map((t, i) => words(1653, 218.2 + i * 2.46, escapeText(t.slice(0, 92)), 2.1)).join("");
const frame = line("M924 210.500V786M923 786.200H1647", 1.600) + line("M923 211H1647M1646.500 210V787", 2) + line("M1649.500 211.500h100.500v81h-100.500z", 1.800) + notes;

const mats = [["STRUCTURE", "rubble"], ["BLOCK WORK", "wall"], ["PLASTER", "grey"], ["STONE", "dark"], ["TILE", "hatch"], ["METAL", "grey"], ["TIMBER", "wall"]];
const mats2 = [["MRP PLY/PLY", "dark"], ["MDF BOARD", "hatch"], ["GLASS", "light"], ["MIRROR", "hatch"], ["ADHESIVE", "white"], ["COMMERCIAL", "grey"]];
const fills = { grey: "#8c8c8c", dark: "#333", light: "#ddd", white: "#fff" };
const swatch = (x, lx) => ([t, f], i) => {
  const y = 335.7 + i * 10.85;
  return `<rect x="${x}" y="${y - 4}" width="8" height="8" fill="${fills[f] || `url(#${f})`}" stroke="#000" stroke-width="1.200"/>` + words(lx, y + 1.5, t, 4.2);
};
const rows = [["NO.", "DESCRIPTION", "DATE", "BY"], ["01", "GENERAL UPDATED", "20.02.20xx", "FM"], ["02", "UPDATED WITH TEAM COMMENTS", "27.03.20xx", "FM"], ["03", "CHANGES AS PER OPERATOR", "11.07.20xx", "FM"], ["04", "OVERALL UPDATED", "13.07.20xx", "FM"]];
let rules = "M1649.500 564h100.500";
for (let i = 0; i < 10; i++) rules += `M1649.500 ${571 + i * 6.2}h100.500`;
const block = line("M1649.500 296h100.500v218h-100.500zM1649.500 518h100.500v35.500h-100.500zM1649.500 557h100.500v88.500h-100.500zM1649.500 648.500h100.500v49h-100.500zM1649.500 700.500h100.500v56h-100.500zM1649.500 758.500h100.500v28h-100.500z", 1.800) +
  line("M1649.500 302.500h100.500") + words(1700, 300, "KEY", 3, "middle") +
  line("M1653.500 318h92v90.500h-92zM1653.500 328.500h92M1668 328.500v80M1699.700 328.500v80M1714 328.500v80", 1.100) + words(1699.5, 324.5, "MATERIAL LEGEND", 4, "middle") +
  mats.map(swatch(1657, 1670)).join("") + mats2.map(swatch(1703, 1716)).join("") + words(1716, 396, "BOARD", 4.2) +
  words(1699.5, 561.5, "REVISIONS", 3, "middle") + line(rules, 1) + line("M1663 564v63M1716.300 564v63M1738.400 564v63", 1.200) +
  rows.map((r, i) => { const y = 569 + i * 6.2; return words(1656.500, y, r[0], 3, "middle") + words(1665, y, r[1], 3) + words(1727.500, y, r[2], 3, "middle") + words(1744, y, r[3], 3, "middle"); }).join("") +
  words(1659, 633, "This drawing should be read in conjunction with the following", 2.800) + words(1659, 637, "information: ID Preambles, Project Specific FF&amp;E Control", 2.800) + words(1659, 641, "Book &amp; Project Specific Finishes Schedule.", 2.800) +
  line("M1649.500 714.500h100.500M1649.500 728.500h100.500M1649.500 742.500h100.500M1649.500 772.500h100.500M1672 758.500v28M1698 758.500v14M1724 758.500v28", 1.200) +
  [["CLIENT", "POLO HOTELS", 711], ["PROJECT", "RADISSON HOTEL", 724], ["AREA", "MR SPOINT KING", 738], ["TITLE", "ROOM PLANS", 751]].map(([a, b, y]) => words(1652, y - 6, a, 2) + words(1652, y, b, 4)).join("") +
  [["SCALE", 1651, 762], ["DRAWN BY", 1674, 762], ["APPROVED BY", 1699, 762], ["DATE", 1725, 762], ["JOB NO", 1651, 776], ["DRAWING NO", 1674, 776], ["REV", 1725, 776]].map(([t, x, y]) => words(x, y, t, 2)).join("") +
  words(1661, 768.5, "1:25@A0", 4, "middle") + words(1685, 768.5, "HU", 4, "middle") + words(1711, 768.5, "HU", 4, "middle") + words(1737, 768.5, "21.03.20xx", 4, "middle") + words(1698, 782, "RP-ID-MR-SK-01-101", 4, "middle") + words(1736, 781.5, "06", 4, "middle");

const defs = `<defs>
<pattern id="wall" width="3" height="3" patternUnits="userSpaceOnUse"><rect width="3" height="3" fill="#ddd"/><path d="M0 0l3 3M3 0l-3 3" stroke="#333" stroke-width=".6"/></pattern>
<pattern id="rubble" width="5" height="5" patternUnits="userSpaceOnUse"><rect width="5" height="5" fill="#fff"/><path d="M0 1h2v2H0zM3 0h1.500v1.500H3zM2.500 3h2v1.500h-2z"/><path d="M0 5l5-5" stroke="#000" stroke-width=".7"/></pattern>
<pattern id="hatch" width="3" height="3" patternUnits="userSpaceOnUse"><rect width="3" height="3" fill="#aaa"/><path d="M0 3l3-3M-1 1l2-2M2 4l2-2" stroke="#000" stroke-width="1"/></pattern>
</defs>`;
document.getElementById("sheet1").innerHTML = defs + frame + block + plan1 + plan2 + plan3 + plan4;
document.getElementById("sheet2").innerHTML = frame + line("M909.500 197v605M1763.500 197v605", 1, 'opacity=".5"');
```
